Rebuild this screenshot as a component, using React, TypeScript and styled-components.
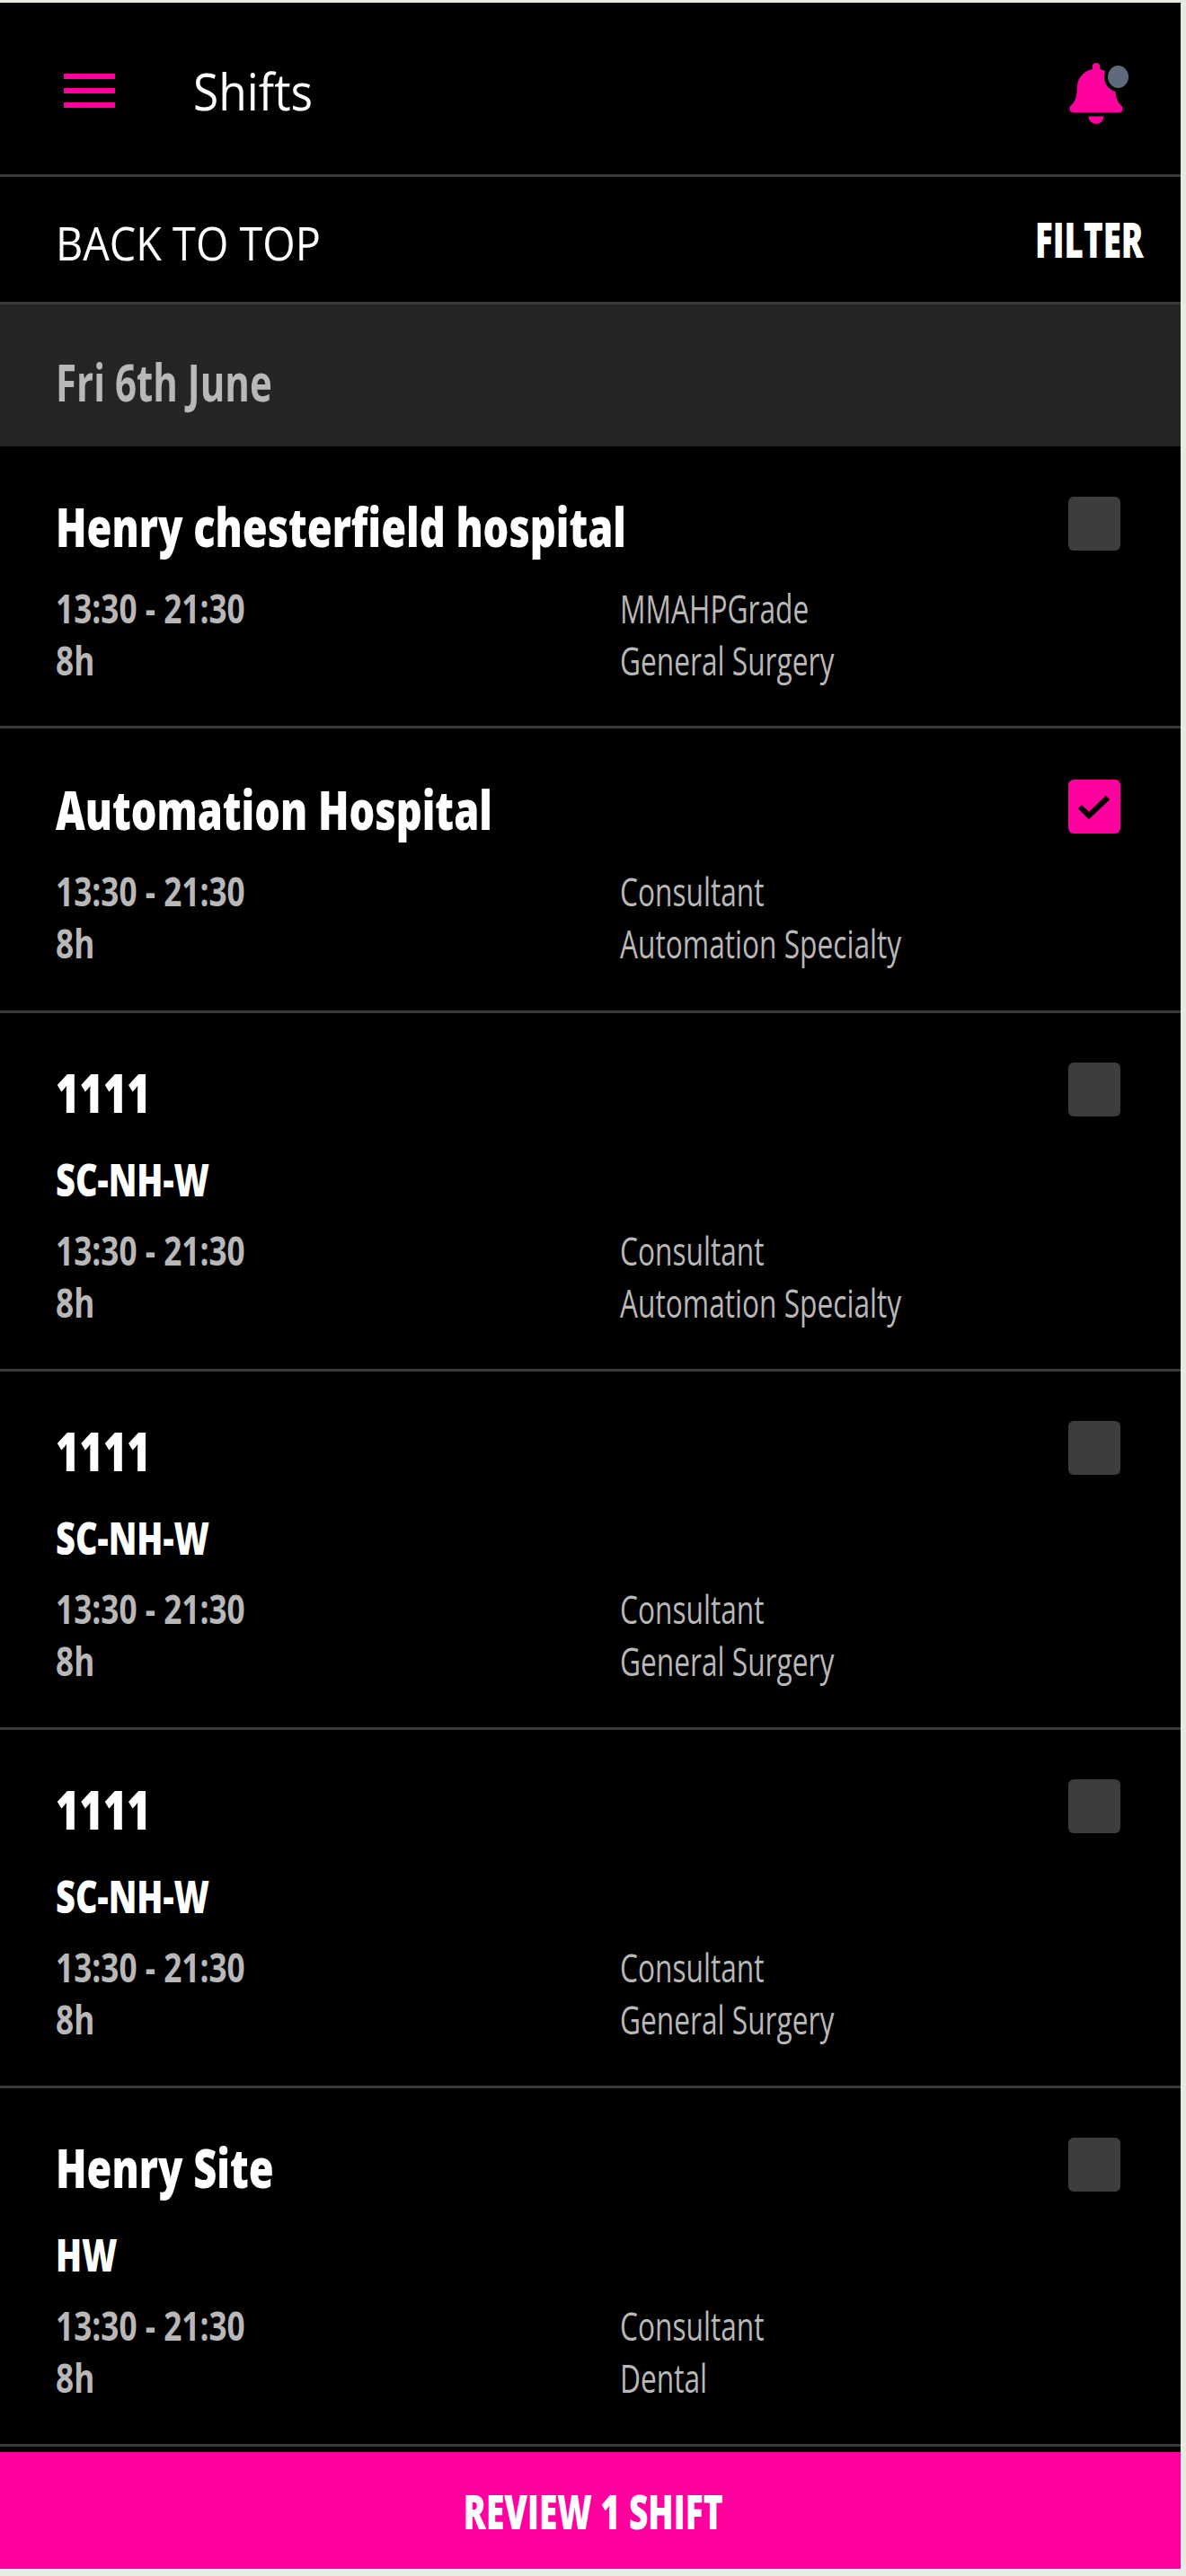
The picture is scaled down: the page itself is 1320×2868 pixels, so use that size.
import React from "react";
import styled, { createGlobalStyle } from "styled-components";
import { FaBell } from "react-icons/fa";

const PINK = "#ff009f";
const LINE = "#3a3a3a";

const GlobalStyle = createGlobalStyle`
  html, body {
    margin: 0;
    padding: 0;
    background: #e6ece2;
  }
  * {
    box-sizing: border-box;
  }
`;

const Screen = styled.div`
  width: 1314px;
  height: 2857px;
  margin-top: 3px;
  background: #000;
  color: #fff;
  font-family: "Open Sans", "Liberation Sans", sans-serif;
  display: flex;
  flex-direction: column;
  overflow: hidden;
`;

const Squeezed = styled.span<{ $x: number }>`
  display: inline-block;
  white-space: nowrap;
  transform: scaleX(${({ $x }) => $x});
  transform-origin: left center;
`;

const Header = styled.header`
  height: 194px;
  flex: none;
  display: flex;
  align-items: center;
  padding: 0 64px 0 71px;
  border-bottom: 3px solid ${LINE};
`;

const Burger = styled.div`
  width: 57px;
  display: flex;
  flex-direction: column;
  gap: 10px;
  margin: 4px 87px 0 0;

  span {
    height: 6px;
    background: ${PINK};
  }
`;

const PageTitle = styled.div`
  flex: 1;
  margin-top: 4px;
  font-size: 56px;
  line-height: 60px;
  color: #fff;
`;

const BellWrap = styled.div`
  position: relative;
  width: 60px;
  height: 68px;
  margin-top: 10px;
  color: ${PINK};
  display: flex;
  align-items: center;
  justify-content: center;

  svg {
    width: 60px;
    height: 68px;
    display: block;
  }
`;

const BellDot = styled.span`
  position: absolute;
  top: -1px;
  right: -10px;
  width: 31px;
  height: 33px;
  border-radius: 50%;
  background: #5f6b7d;
  border: 4px solid #000;
`;

const ActionBar = styled.div`
  height: 139px;
  flex: none;
  display: flex;
  align-items: center;
  justify-content: space-between;
  padding: 0 42px 0 62px;
`;

const BackLink = styled.div`
  margin-top: 7px;
  font-size: 52px;
  line-height: 60px;
`;

const FilterLink = styled.div`
  width: 120px;
  margin-top: -1px;
  font-size: 54px;
  font-weight: 800;
  line-height: 60px;
`;

const DateBand = styled.div`
  height: 161px;
  flex: none;
  display: flex;
  align-items: center;
  padding: 12px 0 0 62px;
  background: #252525;
  border-top: 3px solid ${LINE};
  color: #b8b8b8;
  font-size: 58px;
  font-weight: 700;
`;

const ShiftRow = styled.section<{ $ward: boolean }>`
  flex: none;
  padding: ${({ $ward }) => ($ward ? "58px 66px 45px 62px" : "60px 66px 46px 62px")};
  border-bottom: 3px solid ${LINE};

  &:first-of-type {
    padding-top: 59px;
    padding-bottom: 44px;
  }
`;

const TitleLine = styled.div`
  height: 60px;
  display: flex;
  align-items: center;
  justify-content: space-between;
`;

const SiteName = styled.div`
  font-size: 61px;
  font-weight: 800;
  line-height: 60px;
`;

const Ward = styled.div`
  margin-top: 37px;
  font-size: 50px;
  font-weight: 800;
  line-height: 60px;
`;

const Check = styled.div<{ $on?: boolean }>`
  flex: none;
  width: 58px;
  height: 60px;
  margin: -6px 1px 0 0;
  border-radius: 6px;
  background: ${({ $on }) => ($on ? PINK : "#3d3d3d")};
  display: flex;
  align-items: center;
  justify-content: center;
`;

const CheckMark = styled.svg`
  width: 36px;
  height: 28px;
  fill: none;
  stroke: #000;
  stroke-width: 6;
`;

const Details = styled.div<{ $afterWard: boolean }>`
  display: grid;
  grid-template-columns: 628px 1fr;
  grid-auto-rows: 58px;
  margin-top: ${({ $afterWard }) => ($afterWard ? "20px" : "32px")};
  font-size: 44px;
  line-height: 58px;
  color: #b8b8b8;
`;

const TimeCell = styled.div`
  font-weight: 700;
`;

const Footer = styled.button`
  margin-top: auto;
  flex: none;
  height: 130px;
  border: 0;
  padding: 0 0 0 6px;
  background: ${PINK};
  color: #fff;
  font-family: inherit;
  font-size: 53px;
  font-weight: 800;
  display: flex;
  align-items: center;
  justify-content: center;
`;

const FooterLabel = styled(Squeezed)`
  transform-origin: center center;
`;

type Shift = {
  site: string;
  ward?: string;
  grade: string;
  specialty: string;
  checked?: boolean;
};

const shifts: Shift[] = [
  { site: "Henry chesterfield hospital", grade: "MMAHPGrade", specialty: "General Surgery" },
  { site: "Automation Hospital", grade: "Consultant", specialty: "Automation Specialty", checked: true },
  { site: "1111", ward: "SC-NH-W", grade: "Consultant", specialty: "Automation Specialty" },
  { site: "1111", ward: "SC-NH-W", grade: "Consultant", specialty: "General Surgery" },
  { site: "1111", ward: "SC-NH-W", grade: "Consultant", specialty: "General Surgery" },
  { site: "Henry Site", ward: "HW", grade: "Consultant", specialty: "Dental" },
];

const App: React.FC = () => {
  return (
    <Screen>
      <GlobalStyle />
      <Header>
        <Burger>
          <span />
          <span />
          <span />
        </Burger>
        <PageTitle>
          <Squeezed $x={0.92}>Shifts</Squeezed>
        </PageTitle>
        <BellWrap>
          <FaBell />
          <BellDot />
        </BellWrap>
      </Header>
      <ActionBar>
        <BackLink>
          <Squeezed $x={0.9}>BACK TO TOP</Squeezed>
        </BackLink>
        <FilterLink>
          <Squeezed $x={0.68}>FILTER</Squeezed>
        </FilterLink>
      </ActionBar>
      <DateBand>
        <Squeezed $x={0.725}>Fri 6th June</Squeezed>
      </DateBand>
      {shifts.map((shift, i) => (
        <ShiftRow key={i} $ward={!!shift.ward}>
          <TitleLine>
            <SiteName>
              <Squeezed $x={0.74}>{shift.site}</Squeezed>
            </SiteName>
            <Check $on={shift.checked}>
              {shift.checked && (
                <CheckMark viewBox="0 0 36 28">
                  <path d="M2 14l10 10L33 4" />
                </CheckMark>
              )}
            </Check>
          </TitleLine>
          {shift.ward && (
            <Ward>
              <Squeezed $x={0.76}>{shift.ward}</Squeezed>
            </Ward>
          )}
          <Details $afterWard={!!shift.ward}>
            <TimeCell>
              <Squeezed $x={0.8}>13:30 - 21:30</Squeezed>
            </TimeCell>
            <div>
              <Squeezed $x={0.72}>{shift.grade}</Squeezed>
            </div>
            <TimeCell>
              <Squeezed $x={0.8}>8h</Squeezed>
            </TimeCell>
            <div>
              <Squeezed $x={0.72}>{shift.specialty}</Squeezed>
            </div>
          </Details>
        </ShiftRow>
      ))}
      <Footer>
        <FooterLabel $x={0.7}>REVIEW 1 SHIFT</FooterLabel>
      </Footer>
    </Screen>
  );
};

export default App;
